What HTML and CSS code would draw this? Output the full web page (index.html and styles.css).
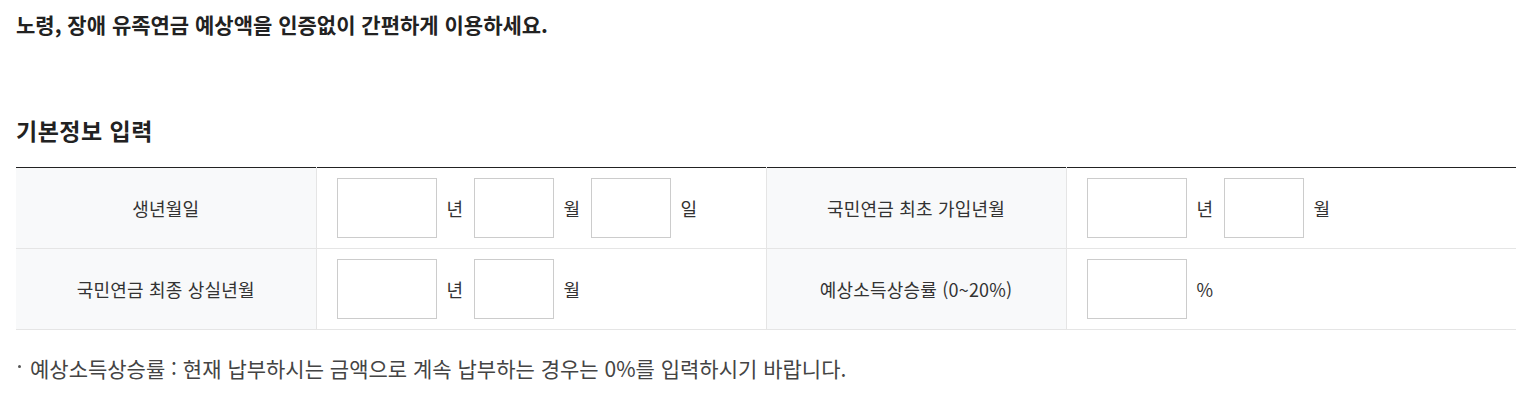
FILE: index.html
```html
<!DOCTYPE html>
<html lang="ko">
<head>
<meta charset="utf-8">
<link rel="stylesheet" href="styles.css">
</head>
<body>
<div class="wrap">
  <p class="intro">노령, 장애 유족연금 예상액을 인증없이 간편하게 이용하세요.</p>
  <h2 class="section-title">기본정보 입력</h2>
  <table class="form-table">
    <colgroup>
      <col class="c-th"><col class="c-td"><col class="c-th"><col class="c-td">
    </colgroup>
    <tr>
      <th>생년월일</th>
      <td><div class="fields"><input class="in-w" type="text"><span class="unit">년</span><input class="in-s" type="text"><span class="unit">월</span><input class="in-s" type="text"><span class="unit">일</span></div></td>
      <th>국민연금 최초 가입년월</th>
      <td><div class="fields"><input class="in-w" type="text"><span class="unit">년</span><input class="in-s" type="text"><span class="unit">월</span></div></td>
    </tr>
    <tr>
      <th>국민연금 최종 상실년월</th>
      <td><div class="fields"><input class="in-w" type="text"><span class="unit">년</span><input class="in-s" type="text"><span class="unit">월</span></div></td>
      <th>예상소득상승률 (0~20%)</th>
      <td><div class="fields"><input class="in-w" type="text"><span class="unit">%</span></div></td>
    </tr>
  </table>
  <p class="note">예상소득상승률 : 현재 납부하시는 금액으로 계속 납부하는 경우는 0%를 입력하시기 바랍니다.</p>
</div>
</body>
</html>
```

FILE: styles.css
```css
html, body {
  margin: 0;
  padding: 0;
  background: #fff;
}
body {
  font-family: "Noto Sans CJK KR", "Noto Sans", sans-serif;
  color: #333;
}
.wrap {
  width: 1500px;
  margin-left: 16px;
}
.intro {
  margin: 0;
  padding-top: 8px;
  font-size: 21px;
  line-height: 32px;
  font-weight: 700;
  color: #222;
}
.section-title {
  margin: 0;
  padding-top: 74px;
  font-size: 23px;
  line-height: 32px;
  font-weight: 700;
  color: #222;
  letter-spacing: 0.5px;
}
.form-table {
  margin-top: 21px;
  width: 1500px;
  border-collapse: collapse;
  table-layout: fixed;
  border-top: 1px solid #222;
}
.c-th { width: 300px; }
.c-td { width: 450px; }
.form-table th {
  background: #f8f9fa;
  font-weight: 400;
  font-size: 18px;
  color: #333;
  text-align: center;
  height: 80px;
  padding: 0;
  border-bottom: 1px solid #e5e5e5;
  border-right: 1px solid #e5e5e5;
  letter-spacing: 0.2px;
}
.form-table td {
  height: 80px;
  padding: 0 20px;
  border-bottom: 1px solid #e5e5e5;
  border-right: 1px solid #e5e5e5;
  box-sizing: border-box;
}
.form-table td:last-child {
  border-right: none;
}
.fields {
  display: flex;
  align-items: center;
}
.fields input {
  box-sizing: border-box;
  height: 60px;
  border: 1px solid #cccccc;
  background: #fff;
  margin: 0;
  padding: 0 8px;
  outline: none;
}
.in-w { width: 100px; }
.in-s { width: 80px; }
.unit {
  font-size: 18px;
  color: #333;
  margin: 0 10px;
  min-width: 17px;
}
.note {
  position: relative;
  margin: 24px 0 0;
  padding-left: 14px;
  font-size: 21px;
  line-height: 28px;
  color: #444;
}
.note::before {
  content: "";
  position: absolute;
  left: 2px;
  top: 11px;
  width: 3px;
  height: 3px;
  background: #555;
  border-radius: 50%;
}
```
